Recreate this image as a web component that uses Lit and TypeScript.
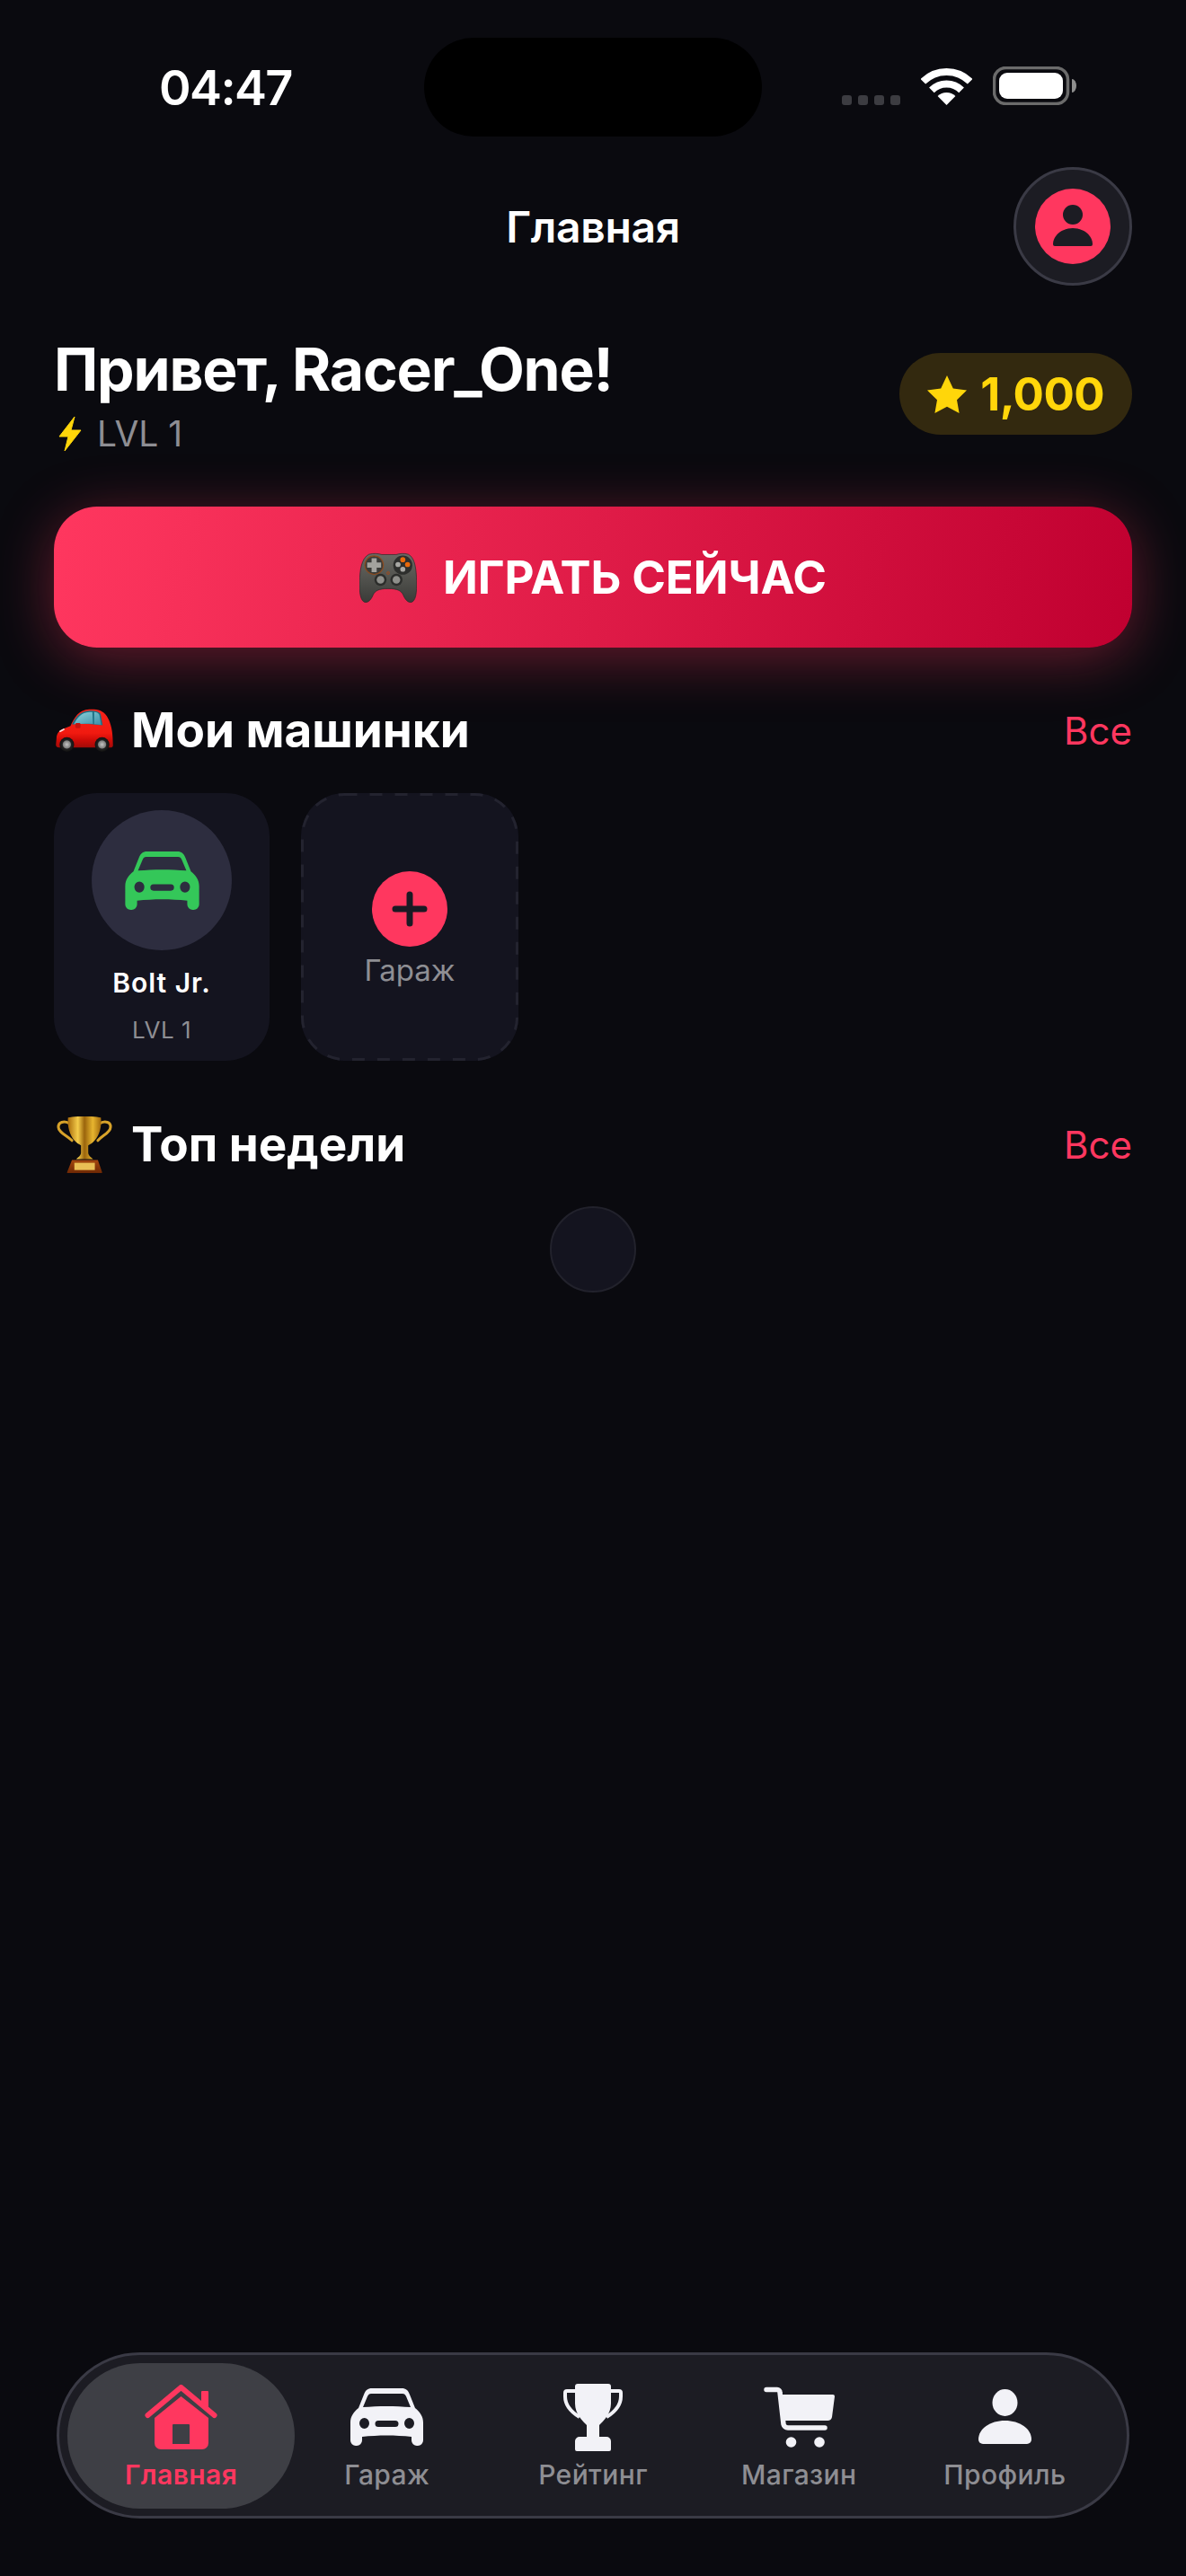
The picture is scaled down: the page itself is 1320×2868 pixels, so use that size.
import { LitElement, html, css } from "lit";
import { customElement } from "lit/decorators.js";

const carPath = "M24 0H57C62 0 64 2 66 7L72 22C77 26 81 31 81 38V58a6 6 0 0 1-6 6H74a6 6 0 0 1-6-6V54C50 52 31 52 13 54V58a6 6 0 0 1-6 6H6a6 6 0 0 1-6-6V38C0 31 4 26 9 22L15 7C17 2 19 0 24 0ZM23 6H58C60 6 61 7 62 9L67 21C50 19.5 31 19.5 14 21L19 9C20 7 21 6 23 6ZM10 39a5.5 6 0 1 0 11 0a5.5 6 0 1 0-11 0ZM60 39a5.5 6 0 1 0 11 0a5.5 6 0 1 0-11 0ZM31 36H50a3.5 3.5 0 0 1 0 7H31a3.5 3.5 0 0 1 0-7Z";

const carIcon = (w: number, h: number) => html`<svg width=${w} height=${h} viewBox="0 0 81 64"><path fill="currentColor" fill-rule="evenodd" d=${carPath}/></svg>`;

const homeIcon = html`<svg width="81" height="72" viewBox="0 0 81 72">
  <path d="M63 8a1 1 0 0 1 1-1h6a1 1 0 0 1 1 1V28L63 20Z" fill="currentColor"/>
  <path d="M3.500 34L40.500 3L77.500 34" fill="none" stroke="currentColor" stroke-width="6" stroke-linecap="round" stroke-linejoin="round"/>
  <path fill="currentColor" fill-rule="evenodd" d="M40.500 13L71 37V65a7 7 0 0 1-7 7H18a7 7 0 0 1-7-7V37ZM32 44a1 1 0 0 0-1 1V66H50V45a1 1 0 0 0-1-1Z"/>
</svg>`;

const trophyIcon = html`<svg width="66" height="75" viewBox="0 0 66 75">
  <path fill="currentColor" d="M13 3a3 3 0 0 1 3-3H50a3 3 0 0 1 3 3V22C53 34 44 42 40 46V59H48a5 5 0 0 1 5 5V73a2 2 0 0 1-2 2H15a2 2 0 0 1-2-2V64a5 5 0 0 1 5-5H26V46C22 42 13 34 13 22Z"/>
  <path fill="none" stroke="currentColor" stroke-width="4" d="M14 8H4a2 2 0 0 0-2 2V14C2 24 8 31 18 37M52 8H62a2 2 0 0 1 2 2V14C64 24 58 31 48 37"/>
</svg>`;

const cartIcon = html`<svg width="79" height="68" viewBox="0 0 79 68">
  <path fill="currentColor" d="M20 9H77a2 2 0 0 1 2 2L76 34a5 5 0 0 1-5 4H23Z"/>
  <path fill="none" stroke="currentColor" stroke-width="5.500" stroke-linecap="round" stroke-linejoin="round" d="M3 3.500H15a3 3 0 0 1 3 3L22 42a5 5 0 0 0 5 4H68"/>
  <circle cx="30.500" cy="62" r="5.800" fill="currentColor"/>
  <circle cx="62" cy="62" r="5.800" fill="currentColor"/>
</svg>`;

const personIcon = html`<svg width="59" height="62" viewBox="0 0 59 62">
  <ellipse cx="29.500" cy="15" rx="14" ry="15" fill="currentColor"/>
  <path fill="currentColor" d="M0 56C0 44 13 35 29.500 35C46 35 59 44 59 56a5 5 0 0 1-5 5H5a5 5 0 0 1-5-5Z"/>
</svg>`;

const tabs = [
  { label: "Главная", icon: homeIcon, active: true },
  { label: "Гараж", icon: carIcon(81, 64), active: false },
  { label: "Рейтинг", icon: trophyIcon, active: false },
  { label: "Магазин", icon: cartIcon, active: false },
  { label: "Профиль", icon: personIcon, active: false },
];

const redCar = html`<svg width="64" height="48" viewBox="70 75 188 142">
  <defs>
    <linearGradient id="cb" x1="0" y1="0" x2="0" y2="1"><stop offset="0" stop-color="#f5231a"/><stop offset=".62" stop-color="#f11a10"/><stop offset=".8" stop-color="#d00c08"/><stop offset="1" stop-color="#a20b08"/></linearGradient>
    <linearGradient id="cw" x1="0" y1="0" x2="1" y2="1"><stop offset="0" stop-color="#8fd4dc"/><stop offset="1" stop-color="#3c8ea6"/></linearGradient>
    <radialGradient id="wh"><stop offset="0" stop-color="#c4c4c4"/><stop offset=".5" stop-color="#80807f"/><stop offset=".62" stop-color="#222"/><stop offset="1" stop-color="#111"/></radialGradient>
  </defs>
  <path fill="url(#cb)" d="M72 172C72 160 78 148 92 142L118 132C130 104 146 78 180 77C206 76 226 80 238 100C248 116 256 140 257 172L258 196C258 201 254 203 250 203H80C74 203 70 200 70 194Z"/>
  <path fill="#1c6f83" d="M123 127C134 104 150 84 180 82C196 81 208 83 217 92L224 130C190 124 150 124 123 127Z"/>
  <path fill="url(#cw)" d="M130 126C140 104 154 88 180 86H190L192 125C170 124 150 124 130 126ZM196 86C204 86 210 89 213 95L219 128L196 126Z"/>
  <rect x="134" y="122" width="17" height="17" rx="4" fill="#c8130e"/>
  <path d="M84 150L96 143" stroke="#fff" stroke-width="5" stroke-linecap="round" opacity=".85"/>
  <circle cx="106" cy="193" r="24" fill="url(#wh)"/>
  <circle cx="222" cy="193" r="24" fill="url(#wh)"/>
</svg>`;

const pad = html`<svg width="64" height="56" viewBox="75 92 180 158">
  <defs>
    <linearGradient id="pb" x1="0" y1="0" x2="0" y2="1"><stop offset="0" stop-color="#6a6a64"/><stop offset="1" stop-color="#3a3b38"/></linearGradient>
  </defs>
  <path fill="url(#pb)" stroke="#2a2a2a" stroke-width="2" d="M105 98C120 94 135 96 145 99H190C200 96 215 94 228 98C245 106 252 130 254 170C255 200 256 240 240 248C228 252 218 240 212 225C205 212 195 206 165 206C135 206 125 212 118 225C112 240 102 252 90 248C74 240 74 200 76 170C78 130 88 106 105 98Z"/>
  <circle cx="121" cy="132" r="29" fill="#3a3b38" stroke="#8d4a1d" stroke-width="3"/>
  <path fill="#a3a39e" d="M113 110h16v14h14v16h-14v14h-16v-14h-14v-16h14Z"/>
  <circle cx="211" cy="132" r="30" fill="#2d2e2c"/>
  <circle cx="211" cy="115" r="8" fill="#e8690b"/>
  <circle cx="226" cy="130" r="8" fill="#e8690b"/>
  <circle cx="196" cy="130" r="8" fill="#a8a8a4"/>
  <circle cx="211" cy="145" r="8" fill="#a8a8a4"/>
  <circle cx="141" cy="178" r="19" fill="#2c2d2b"/><circle cx="141" cy="178" r="12" fill="#8f8f8b"/>
  <circle cx="191" cy="178" r="19" fill="#2c2d2b"/><circle cx="191" cy="178" r="12" fill="#8f8f8b"/>
  <circle cx="165" cy="157" r="4" fill="none" stroke="#b5470f" stroke-width="2"/>
</svg>`;

const cup = html`<svg width="64" height="63" viewBox="72 70 183 188">
  <defs>
    <linearGradient id="tg" x1="0" y1="0" x2="1" y2="0"><stop offset="0" stop-color="#a86a0a"/><stop offset=".3" stop-color="#f4cc4a"/><stop offset=".5" stop-color="#9a640c"/><stop offset=".75" stop-color="#e7b52f"/><stop offset="1" stop-color="#a1680c"/></linearGradient>
    <linearGradient id="tb" x1="0" y1="0" x2="0" y2="1"><stop offset="0" stop-color="#a4470f"/><stop offset="1" stop-color="#6e2804"/></linearGradient>
  </defs>
  <path fill="none" stroke="#d7a22a" stroke-width="9" stroke-linecap="round" d="M112 92C96 84 76 88 77 106C78 124 104 132 122 150M216 92C232 84 252 88 250 106C249 124 224 132 208 150"/>
  <path fill="url(#tg)" d="M109 74C130 68 198 68 218 74C222 110 210 150 176 166V190C176 200 186 206 192 212H136C142 206 152 200 152 190V166C118 150 106 110 109 74Z"/>
  <path fill="url(#tb)" d="M122 215H208L222 255C223 257 221 258 219 258H108C106 258 105 257 106 255Z"/>
  <rect x="130" y="224" width="68" height="24" fill="#e9bf55"/>
</svg>`;

@customElement("app-root")
export class AppRoot extends LitElement {
  static styles = css`
    :host {
      display: flex;
      flex-direction: column;
      width: 1320px;
      height: 2868px;
      background: #0a0a0f;
      color: #fff;
      font-family: Inter, "Noto Sans", sans-serif;
      overflow: hidden;
    }
    svg { display: block; flex: none; }
    .status { display: flex; align-items: flex-start; height: 110px; padding-top: 42px; flex: none; }
    .time { width: 472px; padding-left: 177px; box-sizing: border-box; padding-top: 26px; font-size: 54px; line-height: 60px; font-weight: 600; letter-spacing: -1.6px; }
    .island { width: 376px; height: 110px; border-radius: 55px; background: #000; flex: none; }
    .sys { display: flex; align-items: flex-end; margin-left: 89px; margin-top: 33px; height: 42px; }
    .dots { display: flex; gap: 7px; margin-right: 23px; }
    .dots i { width: 11px; height: 11px; border-radius: 3px; background: #3c3c41; }
    .wifi { margin-right: 23px; }
    .header { display: grid; grid-template-columns: 132px 1fr 132px; align-items: center; padding: 0 60px; margin-top: 34px; height: 132px; flex: none; }
    .title { grid-column: 2; text-align: center; font-size: 48px; font-weight: 600; letter-spacing: -0.3px; }
    .avatar { width: 132px; height: 132px; box-sizing: border-box; border-radius: 50%; background: #1c1c23; border: 3px solid #3a3a45; display: flex; align-items: center; justify-content: center; }
    .greet { display: flex; justify-content: space-between; padding: 0 60px; margin-top: 53px; flex: none; }
    .hello { font-size: 66px; line-height: 80px; font-weight: 700; letter-spacing: -1.2px; }
    .lvl { display: flex; align-items: center; gap: 17px; margin-top: 8px; padding-left: 5px; font-size: 39px; line-height: 48px; color: #8e8e93; font-weight: 400; }
    .coins { display: flex; align-items: center; gap: 15px; height: 91px; box-sizing: border-box; padding: 0 31px; margin-top: 22px; border-radius: 46px; background: #33290f; color: #ffd60a; font-size: 51px; font-weight: 700; letter-spacing: -0.6px; }
    .play { display: flex; align-items: center; justify-content: center; gap: 29px; margin: 57px 60px 0; height: 157px; border-radius: 48px; background: linear-gradient(100deg, #ff375f 0%, #c00030 100%); box-shadow: 0 12px 64px rgba(255, 55, 95, .38); font-size: 51px; font-weight: 700; letter-spacing: -0.1px; flex: none; }
    .sec { display: flex; align-items: center; justify-content: space-between; padding: 0 60px; flex: none; }
    .sec-t { display: flex; align-items: center; gap: 20px; padding-left: 2px; font-size: 53px; line-height: 66px; font-weight: 700; }
    .all { color: #ff375f; font-size: 42px; font-weight: 400; }
    .s1 { margin-top: 59px; }
    .s2 { margin-top: 60px; }
    .cards { display: flex; gap: 35px; padding: 0 60px; margin-top: 37px; flex: none; }
    .card { position: relative; width: 240px; height: 298px; box-sizing: border-box; border-radius: 48px; background: #14141f; display: flex; flex-direction: column; align-items: center; }
    .disc { width: 156px; height: 156px; border-radius: 50%; background: #2d2d3f; margin-top: 19px; display: flex; align-items: center; justify-content: center; color: #34c759; }
    .name { font-size: 30px; line-height: 36px; font-weight: 600; margin-top: 18px; letter-spacing: 1px; }
    .sub { font-size: 26px; line-height: 32px; color: #8e8e93; margin-top: 19px; letter-spacing: .5px; }
    .add { width: 242px; padding-top: 87px; gap: 6px; }
    .dash { position: absolute; inset: 0; }
    .plus { width: 84px; height: 84px; border-radius: 50%; background: #ff375f; display: flex; align-items: center; justify-content: center; }
    .add-l { font-size: 33px; line-height: 40px; color: #8e8e93; }
    .main { flex: 1; display: flex; flex-direction: column; min-height: 0; }
    .spin { width: 96px; height: 96px; box-sizing: border-box; border-radius: 50%; background: #14141f; border: 2px solid #22222c; margin: 36px auto 0; }
    .tabbar { display: grid; grid-template-columns: repeat(5, 1fr); align-items: stretch; box-sizing: border-box; width: 1194px; height: 185px; margin: 0 0 64px 63px; padding: 0 21px; border-radius: 93px; background: #1c1c23; border: 3px solid #3a3a45; flex: none; }
    .tab { position: relative; display: flex; flex-direction: column; align-items: center; color: #f2f2f7; }
    .tab .ic { position: relative; height: 76px; margin-top: 31px; display: flex; align-items: center; justify-content: center; }
    .tab .lb { position: relative; margin-top: 8px; font-size: 30px; line-height: 36px; font-weight: 500; color: #8e8e93; letter-spacing: .4px; }
    .tab.on { color: #ff375f; }
    .tab.on .lb { color: #ff375f; font-weight: 600; }
    .pill { position: absolute; top: 9px; bottom: 8px; left: -12px; right: -12px; border-radius: 81px; background: #3e3f45; }
  `;

  render() {
    return html`
      <div class="status">
        <div class="time">04:47</div>
        <div class="island"></div>
        <div class="sys">
          <div class="dots"><i></i><i></i><i></i><i></i></div>
          <svg class="wifi" width="57" height="42" viewBox="0 0 57 42">
            <path fill="none" stroke="#fff" stroke-width="8" d="M2.300 15.800A37 37 0 0 1 54.700 15.800M11.900 25.400A23.500 23.500 0 0 1 45.100 25.400"/>
            <path fill="#fff" d="M28.500 42L18.600 32.100A14 14 0 0 1 38.400 32.100Z"/>
          </svg>
          <svg width="93" height="43" viewBox="0 0 93 43">
            <rect x="1.500" y="1.500" width="82" height="40" rx="13" fill="none" stroke="#6b6b6b" stroke-width="3.500"/>
            <rect x="7" y="7" width="71" height="29" rx="9" fill="#fff"/>
            <path d="M88 14a5 7.500 0 0 1 5 7.500a5 7.500 0 0 1-5 7.500Z" fill="#8e8e8e"/>
          </svg>
        </div>
      </div>
      <div class="header">
        <div class="title">Главная</div>
        <div class="avatar">
          <svg width="84" height="84" viewBox="0 0 84 84">
            <circle cx="42" cy="42" r="42" fill="#ff375f"/>
            <circle cx="42" cy="29" r="11" fill="#1c1c23"/>
            <path fill="#1c1c23" d="M20 62C20 52 30 44 42 44C54 44 64 52 64 62Q64 64 62 64H22Q20 64 20 62Z"/>
          </svg>
        </div>
      </div>
      <div class="greet">
        <div>
          <div class="hello">Привет, Racer_One!</div>
          <div class="lvl">
            <svg width="26" height="40" viewBox="0 0 26 40"><path fill="#ffd60a" stroke="#ffd60a" stroke-linejoin="round" d="M18 1L1 23H11L7 39L25 16H14Z"/></svg>
            <span>LVL 1</span>
          </div>
        </div>
        <div class="coins">
          <svg width="44" height="42" viewBox="0 0 44 42"><path fill="#ffd60a" d="M22 0L28.800 14.400L44 16.400L33 27.200L35.600 42L22 34.800L8.400 42L11 27.200L0 16.400L15.200 14.400Z"/></svg>
          <span>1,000</span>
        </div>
      </div>
      <div class="play">${pad}<span>ИГРАТЬ СЕЙЧАС</span></div>
      <div class="main">
        <div class="sec s1">
          <div class="sec-t">${redCar}<span>Мои машинки</span></div>
          <div class="all">Все</div>
        </div>
        <div class="cards">
          <div class="card">
            <div class="disc">${carIcon(83, 65)}</div>
            <div class="name">Bolt Jr.</div>
            <div class="sub">LVL 1</div>
          </div>
          <div class="card add">
            <svg class="dash" width="242" height="298" viewBox="0 0 242 298"><rect x="1.500" y="1.500" width="239" height="295" rx="47" fill="none" stroke="#23232f" stroke-width="3" stroke-dasharray="14 14"/></svg>
            <div class="plus">
              <svg width="40" height="40" viewBox="0 0 40 40"><path d="M20 4V36M4 20H36" stroke="#1a1a24" stroke-width="7" stroke-linecap="round"/></svg>
            </div>
            <div class="add-l">Гараж</div>
          </div>
        </div>
        <div class="sec s2">
          <div class="sec-t">${cup}<span>Топ недели</span></div>
          <div class="all">Все</div>
        </div>
        <div class="spin"></div>
      </div>
      <div class="tabbar">
        ${tabs.map(
          (t) => html`<div class="tab ${t.active ? "on" : ""}">
            ${t.active ? html`<div class="pill"></div>` : ""}
            <div class="ic">${t.icon}</div>
            <div class="lb">${t.label}</div>
          </div>`
        )}
      </div>
    `;
  }
}
